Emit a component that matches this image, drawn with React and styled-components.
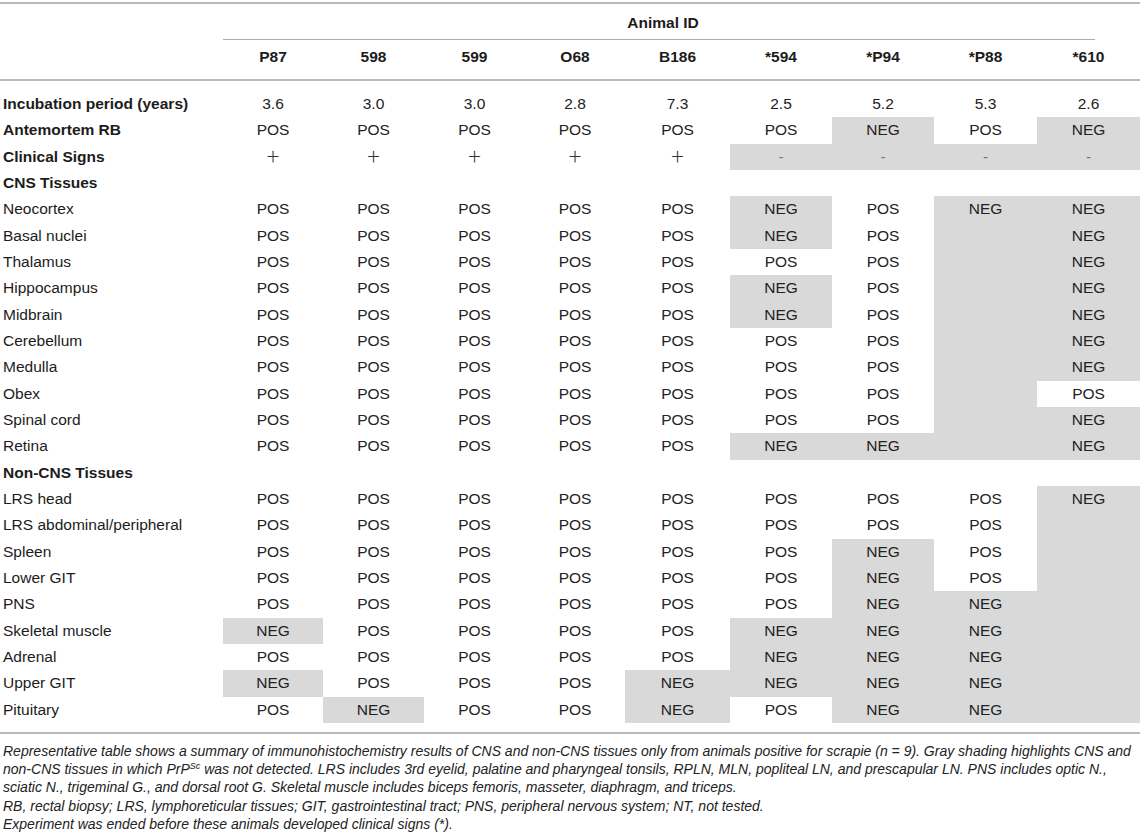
import React from 'react'
import styled, {createGlobalStyle} from 'styled-components'

const GlobalStyle = createGlobalStyle`
  html, body {
    margin: 0;
    padding: 0;
    background: #fff;
  }
  body {
    font-family: "Liberation Sans", Arial, Helvetica, sans-serif;
    color: #222;
  }
`

const ids = ['P87', '598', '599', 'O68', 'B186', '*594', '*P94', '*P88', '*610']
const colWidths = [223, 100, 101, 101, 100, 105, 102, 102, 103, 103]

const P = 'POS'
const N = 'NEG'
const B = ''

// shaded = tissue where PrPSc was not detected (NEG, blank, or no clinical sign)
const isShaded = (v) => v === N || v === B || v === '-'

const rows = [
  {label: 'Incubation period (years)', bold: true, cells: ['3.6', '3.0', '3.0', '2.8', '7.3', '2.5', '5.2', '5.3', '2.6']},
  {label: 'Antemortem RB', bold: true, cells: [P, P, P, P, P, P, N, P, N]},
  {label: 'Clinical Signs', bold: true, cells: ['+', '+', '+', '+', '+', '-', '-', '-', '-']},
  {label: 'CNS Tissues', bold: true},
  {label: 'Neocortex', cells: [P, P, P, P, P, N, P, N, N]},
  {label: 'Basal nuclei', cells: [P, P, P, P, P, N, P, B, N]},
  {label: 'Thalamus', cells: [P, P, P, P, P, P, P, B, N]},
  {label: 'Hippocampus', cells: [P, P, P, P, P, N, P, B, N]},
  {label: 'Midbrain', cells: [P, P, P, P, P, N, P, B, N]},
  {label: 'Cerebellum', cells: [P, P, P, P, P, P, P, B, N]},
  {label: 'Medulla', cells: [P, P, P, P, P, P, P, B, N]},
  {label: 'Obex', cells: [P, P, P, P, P, P, P, B, P]},
  {label: 'Spinal cord', cells: [P, P, P, P, P, P, P, B, N]},
  {label: 'Retina', cells: [P, P, P, P, P, N, N, B, N]},
  {label: 'Non-CNS Tissues', bold: true},
  {label: 'LRS head', cells: [P, P, P, P, P, P, P, P, N]},
  {label: 'LRS abdominal/peripheral', cells: [P, P, P, P, P, P, P, P, B]},
  {label: 'Spleen', cells: [P, P, P, P, P, P, N, P, B]},
  {label: 'Lower GIT', cells: [P, P, P, P, P, P, N, P, B]},
  {label: 'PNS', cells: [P, P, P, P, P, P, N, N, B]},
  {label: 'Skeletal muscle', cells: [N, P, P, P, P, N, N, N, B]},
  {label: 'Adrenal', cells: [P, P, P, P, P, N, N, N, B]},
  {label: 'Upper GIT', cells: [N, P, P, P, N, N, N, N, B]},
  {label: 'Pituitary', cells: [P, N, P, P, N, P, N, N, B]},
]

export default function App() {
  return (
    <Page>
      <GlobalStyle />
      <Table>
        <colgroup>
          {colWidths.map((w, i) => (
            <col key={i} style={{width: w}} />
          ))}
        </colgroup>
        <thead>
          <tr>
            <TopCell />
            <TopCell colSpan={9}>
              <SpanHead>Animal ID</SpanHead>
            </TopCell>
          </tr>
          <tr>
            <IdCell />
            {ids.map((id) => (
              <IdCell key={id}>{id}</IdCell>
            ))}
          </tr>
        </thead>
        <tbody>
          <tr>
            <Spacer colSpan={10} />
          </tr>
          {rows.map((r) => (
            <tr key={r.label}>
              <Label $bold={r.bold}>{r.label}</Label>
              {(r.cells || new Array(9).fill(null)).map((v, i) => (
                <Cell
                  key={i}
                  $shaded={v !== null && isShaded(v)}
                  $dim={v === '-'}
                >
                  {v === '+' ? <Plus>＋</Plus> : v}
                </Cell>
              ))}
            </tr>
          ))}
        </tbody>
      </Table>
      <Notes>
        <p>
          Representative table shows a summary of immunohistochemistry results of CNS and non-CNS tissues only from animals positive for scrapie (n = 9). Gray shading highlights CNS and
          <br />
          non-CNS tissues in which PrP<sup>Sc</sup> was not detected. LRS includes 3rd eyelid, palatine and pharyngeal tonsils, RPLN, MLN, popliteal LN, and prescapular LN. PNS includes optic N.,
          <br />
          sciatic N., trigeminal G., and dorsal root G. Skeletal muscle includes biceps femoris, masseter, diaphragm, and triceps.
        </p>
        <p>RB, rectal biopsy; LRS, lymphoreticular tissues; GIT, gastrointestinal tract; PNS, peripheral nervous system; NT, not tested.</p>
        <p>Experiment was ended before these animals developed clinical signs (*).</p>
      </Notes>
    </Page>
  )
}

const Page = styled.div`
  width: 1140px;
  padding-top: 2px;
`
const Table = styled.table`
  width: 1140px;
  table-layout: fixed;
  border-collapse: separate;
  border-spacing: 0;
  border-top: 2px solid #b9b9b9;
  font-size: 15.5px;
`
const TopCell = styled.th`
  padding: 0;
  height: 36px;
  vertical-align: top;
`
const SpanHead = styled.div`
  box-sizing: border-box;
  height: 36px;
  margin-right: 45px;
  padding: 2px 0 0 8px;
  border-bottom: 1px solid #adadad;
  display: flex;
  align-items: center;
  justify-content: center;
  font-weight: bold;
  color: #1c1c1c;
`
const IdCell = styled.th`
  height: 33px;
  padding: 0 0 6px;
  border-bottom: 2px solid #b9b9b9;
  text-align: center;
  vertical-align: middle;
  font-weight: bold;
  color: #1c1c1c;
`
const Spacer = styled.td`
  height: 10px;
  padding: 0;
`
const Label = styled.td`
  height: 26.33px;
  padding: 0 0 0 3px;
  text-align: left;
  vertical-align: middle;
  white-space: nowrap;
  font-weight: ${(p) => (p.$bold ? 'bold' : 'normal')};
  color: #1c1c1c;
`
const Cell = styled.td`
  height: 26.33px;
  padding: 0;
  text-align: center;
  vertical-align: middle;
  background: ${(p) => (p.$shaded ? '#d9d9d9' : 'transparent')};
  color: ${(p) => (p.$dim ? '#777' : '#222')};
`
const Plus = styled.span`
  font-family: "Noto Sans CJK JP", "Noto Sans", sans-serif;
  font-size: 15px;
  line-height: 1;
  color: #333;
`
const Notes = styled.div`
  margin-top: 9px;
  border-top: 2px solid #b9b9b9;
  padding: 8px 0 0 3px;
  font-size: 14px;
  line-height: 18.3px;
  font-style: italic;
  color: #222;
  white-space: nowrap;

  p {
    margin: 0;
  }
  sup {
    font-size: 9px;
    line-height: 0;
    vertical-align: 5px;
  }
`
